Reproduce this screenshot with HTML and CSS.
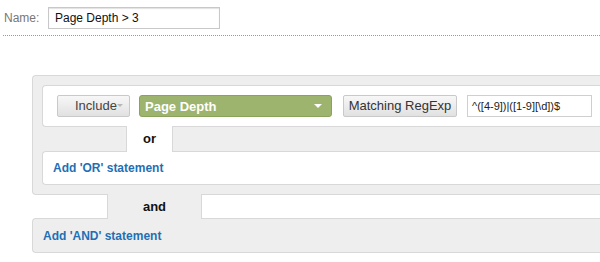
FILE: index.html
```html
<!DOCTYPE html>
<html>
<head>
<meta charset="utf-8">
<link rel="stylesheet" href="styles.css">
</head>
<body>
<div class="page">
  <div class="name-row">
    <span class="name-label">Name:</span>
    <div class="name-input">Page Depth &gt; 3</div>
  </div>
  <div class="divider"></div>

  <div class="outer">
    <div class="cond-box">
      <div class="btn btn-include">Include<span class="caret-gray"></span></div>
      <div class="btn-green"><span>Page Depth</span><span class="caret-white"></span></div>
      <div class="btn btn-match">Matching RegExp</div>
      <div class="regex-input">^([4-9])|([1-9][\d])$</div>
    </div>
    <div class="or-row">
      <div class="or-tab">or</div>
    </div>
    <div class="add-or">
      <a class="link">Add 'OR' statement</a>
    </div>
  </div>
  <div class="and-row">
    <div class="and-tab">and</div>
  </div>
  <div class="add-and">
    <a class="link">Add 'AND' statement</a>
  </div>
</div>
</body>
</html>
```

FILE: styles.css
```css
html, body {
  margin: 0;
  padding: 0;
  background: #fff;
}
.page {
  width: 600px;
  height: 262px;
  overflow: hidden;
  font-family: "Liberation Sans", Arial, sans-serif;
  color: #222;
}
.name-row {
  display: flex;
  align-items: center;
  padding: 7px 0 0 4px;
}
.name-label {
  width: 44px;
  font-size: 12px;
  color: #777;
}
.name-input {
  box-sizing: border-box;
  width: 172px;
  height: 22px;
  border: 1px solid #c8c8c8;
  box-shadow: inset 0 1px 1px #e2e2e2;
  padding: 0 6px;
  font-size: 12px;
  line-height: 20px;
  color: #111;
}
.divider {
  margin: 6px 0 0 3px;
  border-top: 1px dotted #9a9a9a;
}
.outer {
  margin: 39px 0 0 32px;
  width: 600px;
  background: #eeeeee;
  border: 1px solid #d8d8d8;
  border-right: none;
  border-radius: 4px 0 0 4px;
  padding: 9px 0 9px 9px;
}
.cond-box {
  display: flex;
  align-items: center;
  height: 22px;
  padding: 9px 0 9px 14px;
  background: #fff;
  border: 1px solid #d8d8d8;
  border-right: none;
  border-radius: 4px 0 0 4px;
}
.btn {
  box-sizing: border-box;
  height: 22px;
  border: 1px solid #c9c9c9;
  border-radius: 2px;
  background: linear-gradient(#f7f7f7, #e1e1e1);
  font-size: 13px;
  line-height: 20px;
  color: #444;
  display: flex;
  align-items: center;
}
.btn-include {
  width: 73px;
  padding-left: 17px;
}
.caret-gray {
  width: 0;
  height: 0;
  border-left: 3px solid transparent;
  border-right: 3px solid transparent;
  border-top: 3px solid #b8b8b8;
  margin-top: -2px;
}
.btn-green {
  box-sizing: border-box;
  margin-left: 9px;
  width: 193px;
  height: 22px;
  background: #9cb46e;
  border: 1px solid #8ba25c;
  border-radius: 3px;
  color: #fff;
  font-weight: bold;
  font-size: 13px;
  display: flex;
  align-items: center;
  justify-content: space-between;
  padding: 0 9px 0 5px;
}
.caret-white {
  width: 0;
  height: 0;
  border-left: 4px solid transparent;
  border-right: 4px solid transparent;
  border-top: 4px solid #fff;
}
.btn-match {
  margin-left: 11px;
  width: 114px;
  justify-content: center;
  color: #333;
}
.regex-input {
  box-sizing: border-box;
  margin-left: 10px;
  width: 125px;
  height: 22px;
  border: 1px solid #cfcfcf;
  font-size: 11px;
  line-height: 20px;
  padding-left: 4px;
  color: #222;
}
.or-row {
  height: 24px;
  display: flex;
}
.or-tab {
  position: relative;
  z-index: 1;
  box-sizing: border-box;
  margin: -1px 0 -1px 84px;
  width: 47px;
  height: 26px;
  background: #fff;
  border-left: 1px solid #d8d8d8;
  border-right: 1px solid #d8d8d8;
  font-size: 13px;
  font-weight: bold;
  text-align: center;
  line-height: 26px;
  color: #111;
}
.add-or {
  height: 32px;
  background: #fff;
  border: 1px solid #d8d8d8;
  border-right: none;
  border-radius: 4px 0 0 4px;
  padding-left: 10px;
  display: flex;
  align-items: center;
}
.link {
  color: #1f6fb4;
  font-weight: bold;
  font-size: 12px;
}
.and-row {
  height: 23px;
  display: flex;
}
.and-tab {
  position: relative;
  z-index: 1;
  box-sizing: border-box;
  margin: -1px 0 -1px 107px;
  width: 95px;
  height: 25px;
  background: #eeeeee;
  border-left: 1px solid #d8d8d8;
  border-right: 1px solid #d8d8d8;
  font-size: 13px;
  font-weight: bold;
  text-align: center;
  line-height: 25px;
  color: #111;
}
.add-and {
  margin-left: 32px;
  width: 600px;
  height: 33px;
  background: #eeeeee;
  border: 1px solid #d8d8d8;
  border-right: none;
  border-radius: 4px 0 0 4px;
  padding-left: 10px;
  display: flex;
  align-items: center;
}
```
